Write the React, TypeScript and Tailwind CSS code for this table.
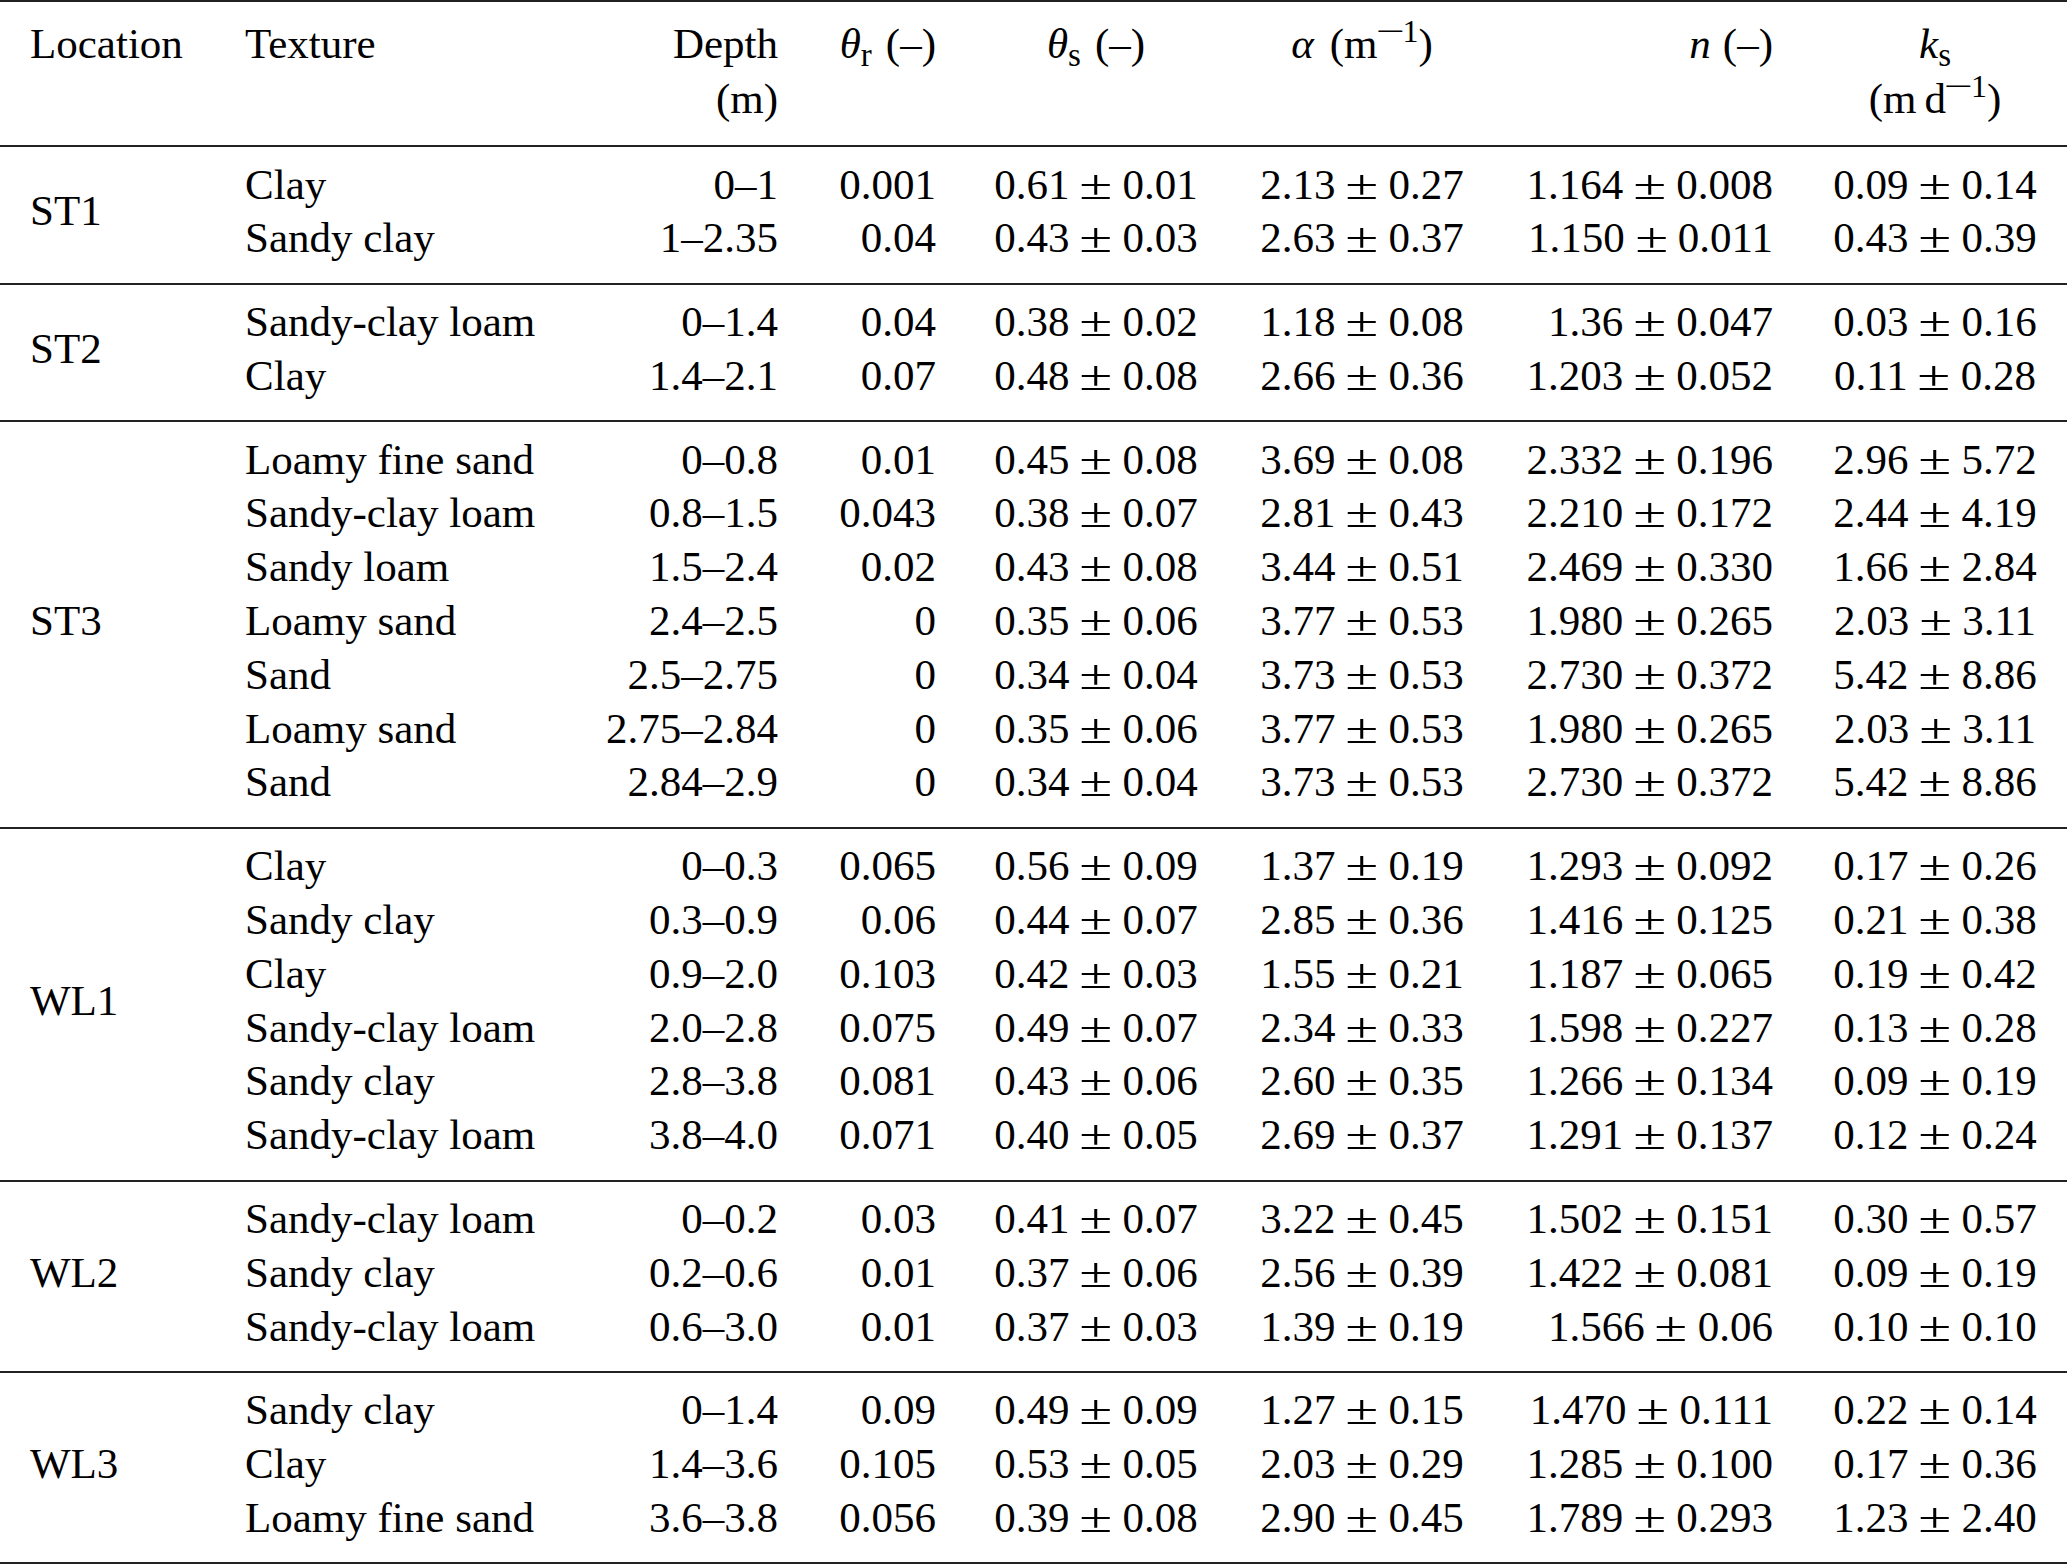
import React from "react";

type PMV = [string, string];
type Row = [string, string, string, PMV, PMV, PMV, PMV];

const groups: { loc: string; rows: Row[] }[] = [
  {
    loc: "ST1",
    rows: [
      ["Clay", "0–1", "0.001", ["0.61", "0.01"], ["2.13", "0.27"], ["1.164", "0.008"], ["0.09", "0.14"]],
      ["Sandy clay", "1–2.35", "0.04", ["0.43", "0.03"], ["2.63", "0.37"], ["1.150", "0.011"], ["0.43", "0.39"]],
    ],
  },
  {
    loc: "ST2",
    rows: [
      ["Sandy-clay loam", "0–1.4", "0.04", ["0.38", "0.02"], ["1.18", "0.08"], ["1.36", "0.047"], ["0.03", "0.16"]],
      ["Clay", "1.4–2.1", "0.07", ["0.48", "0.08"], ["2.66", "0.36"], ["1.203", "0.052"], ["0.11", "0.28"]],
    ],
  },
  {
    loc: "ST3",
    rows: [
      ["Loamy fine sand", "0–0.8", "0.01", ["0.45", "0.08"], ["3.69", "0.08"], ["2.332", "0.196"], ["2.96", "5.72"]],
      ["Sandy-clay loam", "0.8–1.5", "0.043", ["0.38", "0.07"], ["2.81", "0.43"], ["2.210", "0.172"], ["2.44", "4.19"]],
      ["Sandy loam", "1.5–2.4", "0.02", ["0.43", "0.08"], ["3.44", "0.51"], ["2.469", "0.330"], ["1.66", "2.84"]],
      ["Loamy sand", "2.4–2.5", "0", ["0.35", "0.06"], ["3.77", "0.53"], ["1.980", "0.265"], ["2.03", "3.11"]],
      ["Sand", "2.5–2.75", "0", ["0.34", "0.04"], ["3.73", "0.53"], ["2.730", "0.372"], ["5.42", "8.86"]],
      ["Loamy sand", "2.75–2.84", "0", ["0.35", "0.06"], ["3.77", "0.53"], ["1.980", "0.265"], ["2.03", "3.11"]],
      ["Sand", "2.84–2.9", "0", ["0.34", "0.04"], ["3.73", "0.53"], ["2.730", "0.372"], ["5.42", "8.86"]],
    ],
  },
  {
    loc: "WL1",
    rows: [
      ["Clay", "0–0.3", "0.065", ["0.56", "0.09"], ["1.37", "0.19"], ["1.293", "0.092"], ["0.17", "0.26"]],
      ["Sandy clay", "0.3–0.9", "0.06", ["0.44", "0.07"], ["2.85", "0.36"], ["1.416", "0.125"], ["0.21", "0.38"]],
      ["Clay", "0.9–2.0", "0.103", ["0.42", "0.03"], ["1.55", "0.21"], ["1.187", "0.065"], ["0.19", "0.42"]],
      ["Sandy-clay loam", "2.0–2.8", "0.075", ["0.49", "0.07"], ["2.34", "0.33"], ["1.598", "0.227"], ["0.13", "0.28"]],
      ["Sandy clay", "2.8–3.8", "0.081", ["0.43", "0.06"], ["2.60", "0.35"], ["1.266", "0.134"], ["0.09", "0.19"]],
      ["Sandy-clay loam", "3.8–4.0", "0.071", ["0.40", "0.05"], ["2.69", "0.37"], ["1.291", "0.137"], ["0.12", "0.24"]],
    ],
  },
  {
    loc: "WL2",
    rows: [
      ["Sandy-clay loam", "0–0.2", "0.03", ["0.41", "0.07"], ["3.22", "0.45"], ["1.502", "0.151"], ["0.30", "0.57"]],
      ["Sandy clay", "0.2–0.6", "0.01", ["0.37", "0.06"], ["2.56", "0.39"], ["1.422", "0.081"], ["0.09", "0.19"]],
      ["Sandy-clay loam", "0.6–3.0", "0.01", ["0.37", "0.03"], ["1.39", "0.19"], ["1.566", "0.06"], ["0.10", "0.10"]],
    ],
  },
  {
    loc: "WL3",
    rows: [
      ["Sandy clay", "0–1.4", "0.09", ["0.49", "0.09"], ["1.27", "0.15"], ["1.470", "0.111"], ["0.22", "0.14"]],
      ["Clay", "1.4–3.6", "0.105", ["0.53", "0.05"], ["2.03", "0.29"], ["1.285", "0.100"], ["0.17", "0.36"]],
      ["Loamy fine sand", "3.6–3.8", "0.056", ["0.39", "0.08"], ["2.90", "0.45"], ["1.789", "0.293"], ["1.23", "2.40"]],
    ],
  },
];

function PM({ v }: { v: PMV }) {
  return (
    <span className="whitespace-nowrap">
      {v[0]}
      <span className="inline-block w-[53px] text-center">
        <span className="inline-block scale-x-[1.4]">±</span>
      </span>
      {v[1]}
    </span>
  );
}

function Sub({ children }: { children: React.ReactNode }) {
  return <span className="relative top-[7.5px] text-[33px] leading-none not-italic">{children}</span>;
}

function Sup() {
  return (
    <span className="relative top-[-16px] text-[32px] leading-none whitespace-nowrap">
      <span className="inline-block w-[25px] text-center">
        <span className="inline-block scale-x-[1.6]">−</span>
      </span>
      1
    </span>
  );
}

const COLS = "grid grid-cols-[315px_218px_158px_320px_212px_305px_294px]";

export default function App() {
  return (
    <div className="w-[2067px] h-[1566px] bg-white text-black font-['Liberation_Serif','Times_New_Roman',serif] text-[43px]">
      {/* Header */}
      <div className="flex border-t-2 border-[#222] pt-[14px] pb-[19px] leading-[55px]">
        <div className="w-[245px] shrink-0 pl-[30px]">Location</div>
        <div className={COLS}>
          <div>Texture</div>
          <div className="text-right">
            <div>Depth</div>
            <div>(m)</div>
          </div>
          <div className="text-right whitespace-nowrap">
            <i>θ</i>
            <Sub>r</Sub>
            <span className="ml-[14px]">(–)</span>
          </div>
          <div className="text-center whitespace-nowrap">
            <i>θ</i>
            <Sub>s</Sub>
            <span className="ml-[14px]">(–)</span>
          </div>
          <div className="text-center whitespace-nowrap">
            <i>α</i>
            <span className="ml-[16px]">(m</span>
            <Sup />)
          </div>
          <div className="text-right whitespace-nowrap">
            <i>n</i>
            <span className="ml-[12px]">(–)</span>
          </div>
          <div className="pl-[30px] text-center whitespace-nowrap">
            <div>
              <i>k</i>
              <Sub>s</Sub>
            </div>
            <div>
              (m<span className="ml-[8px]">d</span>
              <Sup />)
            </div>
          </div>
        </div>
      </div>

      {groups.map((g, gi) => (
        <div
          key={g.loc}
          className={
            gi === groups.length - 1
              ? "flex border-t-2 border-b-2 border-[#222] pt-[10.5px] pb-[17.5px] leading-[53.8px]"
              : "flex border-t-2 border-[#222] pt-[10.5px] pb-[17.5px] leading-[53.8px]"
          }
        >
          <div className="w-[245px] shrink-0 pl-[30px] flex items-center">{g.loc}</div>
          <div className={COLS}>
            {g.rows.map((r, ri) => (
              <React.Fragment key={ri}>
                <div className="whitespace-nowrap">{r[0]}</div>
                <div className="text-right">{r[1]}</div>
                <div className="text-right">{r[2]}</div>
                <div className="text-center">
                  <PM v={r[3]} />
                </div>
                <div className="text-center">
                  <PM v={r[4]} />
                </div>
                <div className="text-right">
                  <PM v={r[5]} />
                </div>
                <div className="pl-[30px] text-center">
                  <PM v={r[6]} />
                </div>
              </React.Fragment>
            ))}
          </div>
        </div>
      ))}
    </div>
  );
}
